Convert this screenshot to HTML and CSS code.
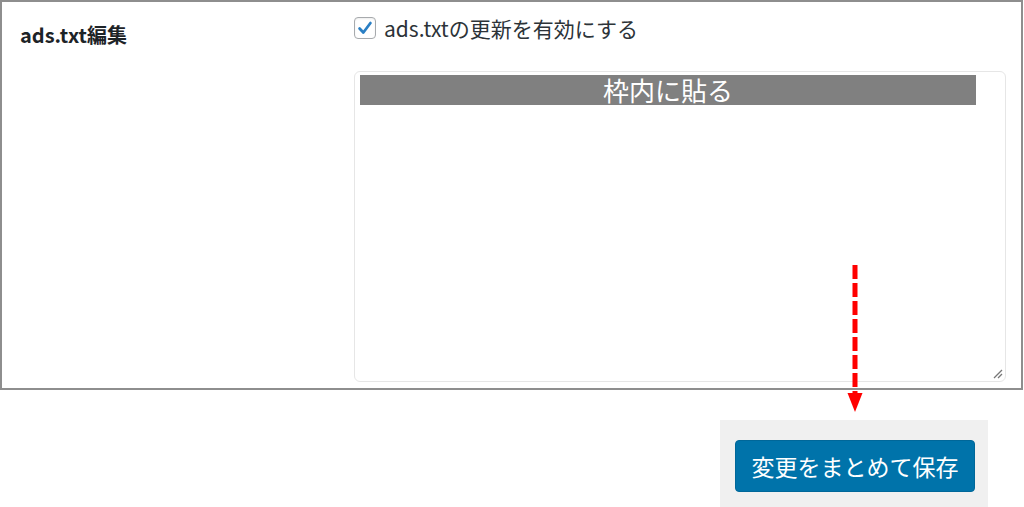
FILE: index.html
```html
<!DOCTYPE html>
<html lang="ja">
<head>
<meta charset="utf-8">
<title>ads.txt編集</title>
<link rel="stylesheet" href="styles.css">
</head>
<body>
<div class="page">
  <div class="frame">
    <div class="label">ads.txt編集</div>
    <div class="field">
      <label class="check-row">
        <span class="checkbox">
          <svg viewBox="0 0 22 22" width="22" height="22"><path d="M5 11.5 L9.2 16 L17 5.5" fill="none" stroke="#2a7fc4" stroke-width="3" stroke-linecap="round" stroke-linejoin="round"/></svg>
        </span>
        <span class="check-text">ads.txtの更新を有効にする</span>
      </label>
      <div class="textarea">
        <div class="bar">枠内に貼る</div>
        <svg class="grip" viewBox="0 0 12 12" width="12" height="12"><path d="M11 3 L3 11 M11 7 L7 11" stroke="#777" stroke-width="1.3" fill="none"/></svg>
      </div>
    </div>
  </div>
  <div class="footer">
    <div class="submit-box">
      <button class="button">変更をまとめて保存</button>
    </div>
  </div>
  <svg class="arrow" viewBox="0 0 16 148" width="16" height="148">
    <line x1="8" y1="0" x2="8" y2="130" stroke="#ff0000" stroke-width="5" stroke-dasharray="14 4"/>
    <polygon points="0.5,128 15.5,128 8,147" fill="#ff0000"/>
  </svg>
</div>
</body>
</html>
```
FILE: styles.css
```css
* { box-sizing: border-box; }
html, body { margin: 0; padding: 0; background: #fff; }
body {
  font-family: "Noto Sans CJK JP", "Noto Sans", sans-serif;
  color: #1d2327;
  width: 1024px;
  height: 507px;
  overflow: hidden;
}
.page { position: relative; width: 1024px; height: 507px; }
.frame {
  width: 1023px;
  height: 390px;
  border: 2px solid #8e8e8e;
  display: grid;
  grid-template-columns: 352px 1fr;
}
.label {
  font-size: 20px;
  font-weight: bold;
  line-height: 28px;
  padding: 19px 0 0 18px;
  color: #1d2327;
}
.field { padding-top: 15px; }
.check-row {
  display: flex;
  align-items: center;
  gap: 8px;
  height: 22px;
}
.checkbox {
  width: 22px;
  height: 22px;
  border: 1px solid #a7aaad;
  border-radius: 4px;
  background: #fff;
  display: flex;
  align-items: center;
  justify-content: center;
  box-shadow: inset 0 1px 2px rgba(0,0,0,0.08);
}
.checkbox svg { display: block; width: 20px; height: 20px; }
.check-text {
  font-size: 21px;
  line-height: 22px;
  color: #2c3338;
}
.textarea {
  position: relative;
  margin-top: 32px;
  width: 652px;
  height: 311px;
  border: 1.5px solid #e6e6e6;
  border-radius: 6px;
  padding: 3px 0 0 5px;
  background: #fff;
}
.bar {
  width: 616px;
  height: 30px;
  background: #808080;
  color: #fff;
  font-size: 26px;
  line-height: 30px;
  text-align: center;
}
.grip { position: absolute; right: 2px; bottom: 2px; }
.footer {
  display: flex;
  justify-content: flex-end;
  padding: 30px 36px 0 0;
}
.submit-box {
  width: 268px;
  height: 90px;
  background: #f0f0f0;
  padding: 20px 0 0 15px;
}
.button {
  width: 240px;
  height: 52px;
  background: #0073aa;
  border: 1px solid #006799;
  border-radius: 4px;
  color: #fff;
  font-family: "Noto Sans CJK JP", "Noto Sans", sans-serif;
  font-size: 23px;
  padding: 0;
}
.arrow { position: absolute; left: 847px; top: 265px; }
```
